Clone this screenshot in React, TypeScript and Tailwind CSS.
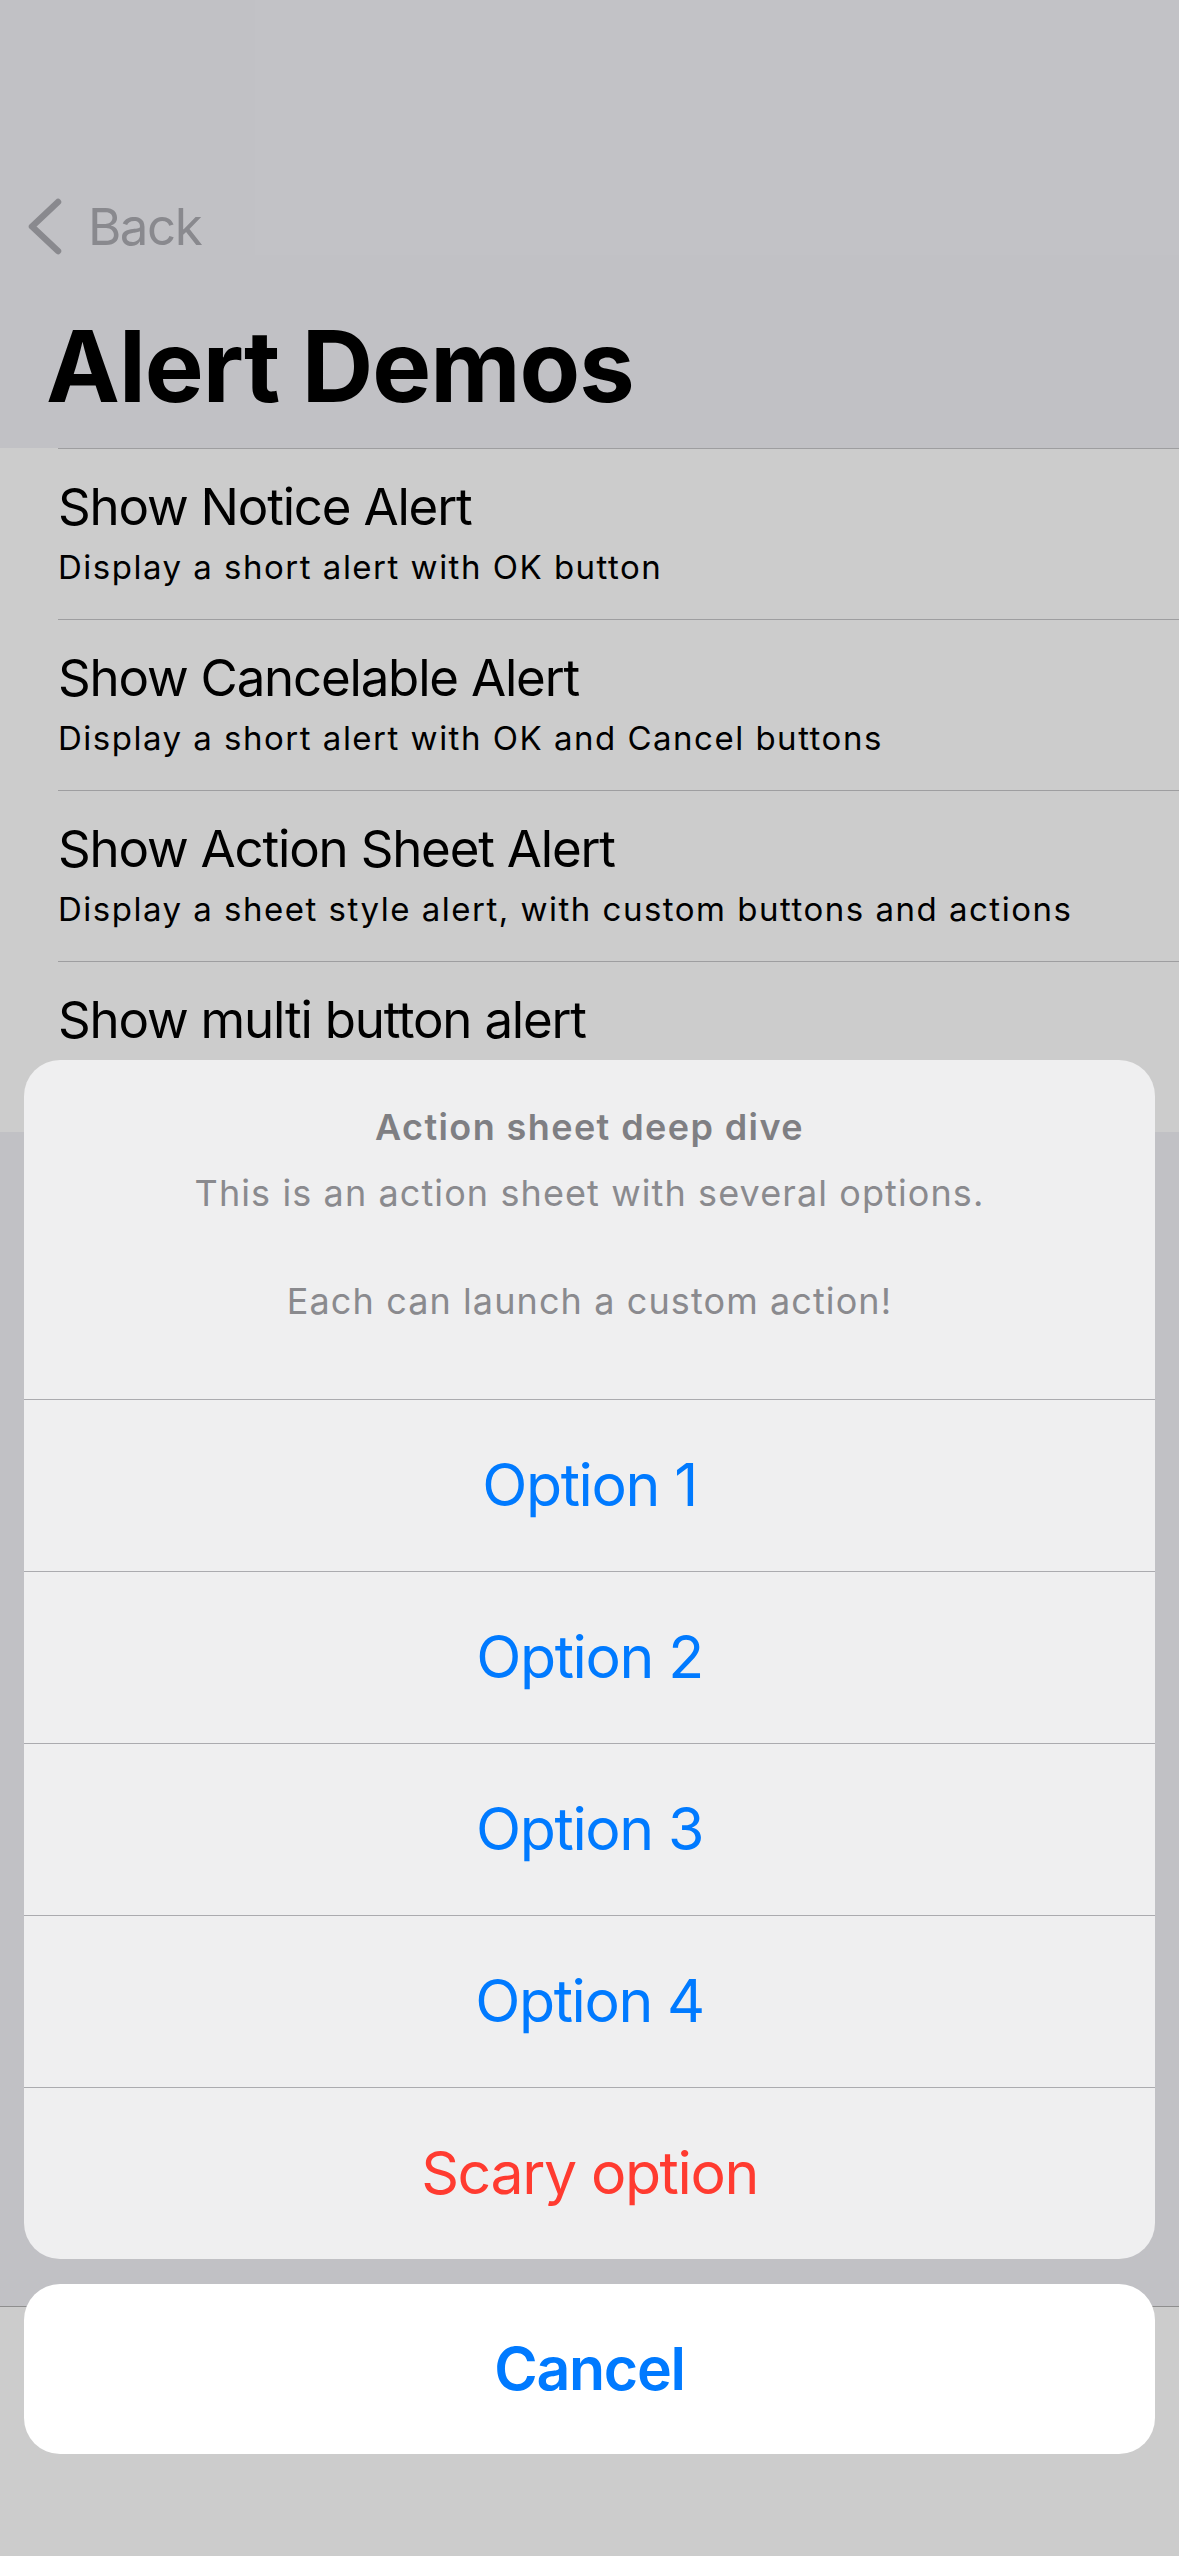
import React from 'react';

const rows = [
  { title: 'Show Notice Alert', sub: 'Display a short alert with OK button' },
  { title: 'Show Cancelable Alert', sub: 'Display a short alert with OK and Cancel buttons' },
  { title: 'Show Action Sheet Alert', sub: 'Display a sheet style alert, with custom buttons and actions' },
  { title: 'Show multi button alert', sub: 'Display an alert with several buttons' },
];

const options = [
  { label: 'Option 1', danger: false },
  { label: 'Option 2', danger: false },
  { label: 'Option 3', danger: false },
  { label: 'Option 4', danger: false },
  { label: 'Scary option', danger: true },
];

function ActionSheet() {
  return (
    <div className="absolute left-[24px] right-[24px] bottom-[102px] flex flex-col gap-[25px]">
      <div className="overflow-hidden rounded-[36px] bg-[#efeff0]">
        {/* Title + message */}
        <div className="flex h-[339px] flex-col items-center pt-[45px] text-center">
          <div className="text-[36px] font-semibold leading-[44px] tracking-[1.4px] text-[#7f7f83]">
            Action sheet deep dive
          </div>
          <div className="mt-[17px] whitespace-pre-line text-[36px] leading-[54px] tracking-[1.1px] text-[#8a8a8e]">
            {'This is an action sheet with several options.\n\nEach can launch a custom action!'}
          </div>
        </div>
        {options.map((o) => (
          <button
            key={o.label}
            className={
              'flex h-[172px] w-full items-center justify-center border-t border-[#ababaf] text-[59px] tracking-[-1.4px] ' +
              (o.danger ? 'text-[#ff3b30]' : 'text-[#007aff]')
            }
          >
            {o.label}
          </button>
        ))}
      </div>
      <button className="flex h-[170px] w-full items-center justify-center rounded-[36px] bg-white text-[59px] font-semibold tracking-[-1.3px] text-[#007aff]">
        Cancel
      </button>
    </div>
  );
}

export default function App() {
  return (
    <div
      className="relative flex h-[2556px] w-[1179px] flex-col overflow-hidden bg-[#f2f2f7] text-black"
      style={{ fontFamily: 'Inter, "Noto Sans", sans-serif' }}
    >
      {/* Nav header */}
      <div className="flex h-[448px] flex-col bg-[#f2f2f7]">
        <div className="mt-[196px] flex h-[61px] items-center">
          <svg className="ml-[26px] h-[61px] w-[40px]" viewBox="0 0 40 61" fill="none">
            <polyline
              points="32,6 6,30.5 32,55"
              stroke="#acacb2"
              strokeWidth="6.5"
              strokeLinecap="round"
              strokeLinejoin="round"
            />
          </svg>
          <span className="ml-[22px] text-[51px] leading-[61px] tracking-[-1.5px] text-[#acacb2]">Back</span>
        </div>
        <h1 className="ml-[46px] mt-[49px] text-[99px] font-bold leading-[120px] tracking-[-1px]">
          Alert Demos
        </h1>
      </div>

      {/* List */}
      <div className="bg-white">
        {rows.map((r) => (
          <div key={r.title} className="h-[171px] pl-[58px]">
            <div className="h-[171px] border-t border-[#c6c6c8] pt-[27px]">
              <div className="text-[51px] leading-[61px] tracking-[-1.2px]">{r.title}</div>
              <div className="mt-[10px] text-[33px] leading-[40px] tracking-[1.5px]">{r.sub}</div>
            </div>
          </div>
        ))}
      </div>

      <div className="flex-1" />

      {/* Bottom toolbar */}
      <div className="h-[250px] border-t border-[#b2b2b2] bg-white" />

      {/* Dimming overlay */}
      <div className="absolute inset-0 bg-black/20" />

      <ActionSheet />
    </div>
  );
}
